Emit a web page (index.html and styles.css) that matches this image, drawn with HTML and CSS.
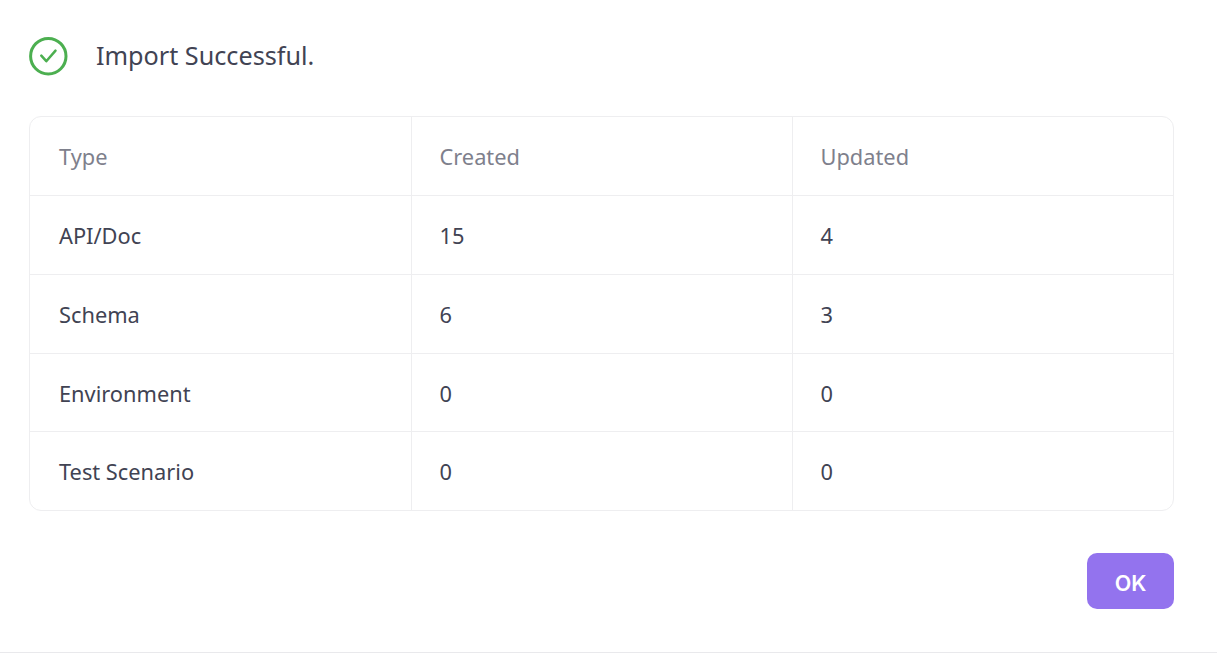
FILE: index.html
```html
<!DOCTYPE html>
<html lang="en">
<head>
<meta charset="utf-8">
<title>Import Successful</title>
<link rel="stylesheet" href="styles.css">
</head>
<body>
<main class="dialog">
  <header class="status">
    <svg class="status-icon" width="40" height="40" viewBox="0 0 40 40" fill="none" aria-hidden="true">
      <circle cx="20.3" cy="20.2" r="17.7" stroke="#4caf50" stroke-width="3"/>
      <path d="M13.3 19.6l5 5.6 9.2-10.6" stroke="#4caf50" stroke-width="2.5" stroke-linecap="round" stroke-linejoin="round"/>
    </svg>
    <h1 class="status-text">Import Successful.</h1>
  </header>
  <div class="table-wrap">
    <table class="result">
      <thead>
        <tr><th>Type</th><th>Created</th><th>Updated</th></tr>
      </thead>
      <tbody>
        <tr><td>API/Doc</td><td>15</td><td>4</td></tr>
        <tr><td>Schema</td><td>6</td><td>3</td></tr>
        <tr class="short"><td>Environment</td><td>0</td><td>0</td></tr>
        <tr><td>Test Scenario</td><td>0</td><td>0</td></tr>
      </tbody>
    </table>
  </div>
  <footer class="actions">
    <button class="ok" type="button">OK</button>
  </footer>
</main>
</body>
</html>
```
FILE: styles.css
```css
* { box-sizing: border-box; }
html, body { margin: 0; height: 100%; background: #fff; }
body { font-family: "Noto Sans", "Open Sans", sans-serif; color: #414353; overflow: hidden; }
.dialog { height: 653px; padding: 36px 43px 0 29px; border-bottom: 1px solid #e9e9ec; }
.status { display: flex; align-items: center; height: 40px; gap: 28px; }
.status-icon { display: block; flex: none; margin-left: -1px; }
.status-text { margin: 0; font-size: 25.2px; font-weight: 400; line-height: 38px; padding-bottom: 2px; }
.table-wrap { margin-top: 40px; border: 1px solid #eeeef0; border-radius: 12px; overflow: hidden; }
.result { width: 100%; border-collapse: collapse; table-layout: fixed; font-size: 21.8px; }
.result th, .result td { height: 79px; padding: 2px 28px 0; text-align: left; font-weight: 400; border-left: 1px solid #eeeef0; border-top: 1px solid #eeeef0; }
.result th:first-child, .result td:first-child { border-left: 0; padding-left: 29px; }
.result thead th { border-top: 0; height: 78px; color: #7e808c; }
.result .short td { height: 78px; }
.actions { display: flex; justify-content: flex-end; margin-top: 42px; }
.ok { width: 87px; height: 56px; padding: 3px 0 0; border: 0; border-radius: 10px; background: #9373ee; color: #fff; font: 600 21.5px "Inter", sans-serif; }
```
